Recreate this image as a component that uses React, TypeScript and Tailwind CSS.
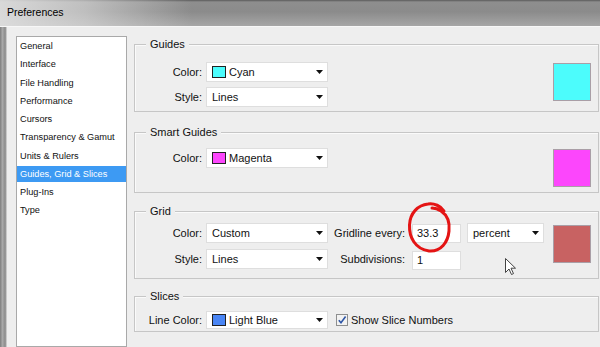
import React from 'react';

const sidebarItems = [
  'General',
  'Interface',
  'File Handling',
  'Performance',
  'Cursors',
  'Transparency & Gamut',
  'Units & Rulers',
  'Guides, Grid & Slices',
  'Plug-Ins',
  'Type',
];

function Arrow() {
  return (
    <svg width="7" height="4" viewBox="0 0 7 4" className="shrink-0">
      <path d="M0 0H7L3.5 4Z" fill="#111" />
    </svg>
  );
}

function Select({ label, swatch, width = 'w-[122px]', height = 'h-[20px]' }: { label: string; swatch?: string; width?: string; height?: string }) {
  return (
    <div className={`flex ${height} ${width} items-center border border-[#dedede] bg-white pl-[5px] pr-[4px]`}>
      {swatch ? <span className={`mr-[3px] h-[12px] w-[14px] shrink-0 border border-[#222] ${swatch}`} /> : null}
      <span className="flex-1 truncate">{label}</span>
      <Arrow />
    </div>
  );
}

function Field({ value }: { value: string }) {
  return <div className="flex h-[19px] w-[49px] items-center border border-[#dedede] bg-white pl-[4px]">{value}</div>;
}

function Label({ children }: { children: React.ReactNode }) {
  return <div className="w-[71px] shrink-0 pr-[4px] text-right">{children}</div>;
}

function GroupBox({ title, className, children }: { title: string; className: string; children: React.ReactNode }) {
  return (
    <div className={`relative flex border border-[#c6c6c6] pr-[7px] shadow-[inset_1px_1px_0_#fafafa] ${className}`}>
      <div className="absolute -top-[8px] left-[11px] bg-[#eeeeee] px-[4px] text-[11px] leading-[14px]">{title}</div>
      {children}
    </div>
  );
}

function Swatch({ color, className }: { color: string; className: string }) {
  return <div className={`ml-auto h-[38px] w-[38px] shrink-0 border border-[#a99ea6] ${color} ${className}`} />;
}

export default function App() {
  return (
    <div className="relative h-[347px] w-[600px] overflow-hidden bg-[#eeeeee] font-['Liberation_Sans',Arial,sans-serif] text-[#111]">
      <div className="flex h-[26px] items-center bg-[linear-gradient(to_right,rgba(225,225,225,0.9)_0%,rgba(225,225,225,0.6)_14%,rgba(225,225,225,0)_32%),linear-gradient(to_bottom,#5a5a5a_0px,#8e8e8e_2px,#8b8b8b_45%,#a6a6a6_100%)] pl-[7px] text-[10.5px] text-black">
        Preferences
      </div>
      <div className="h-px bg-[#f7f7f7]" />

      <div className="flex h-[320px]">
        <div className="w-[7px] shrink-0 bg-[linear-gradient(to_right,#7d7d7d,#a9a9a9_35%,#8a8a8a_75%,#e2e2e2)]" />

        <div className="pl-[9px] pt-[9px]">
          <div className="flex h-full w-[111px] flex-col gap-[2.25px] border border-[#a9a9a9] bg-white pt-[1px] text-[9.2px]">
            {sidebarItems.map((item) => (
              <div
                key={item}
                className={
                  item === 'Guides, Grid & Slices'
                    ? 'h-[16px] bg-[#3d9af3] pl-[3px] leading-[16px] text-white'
                    : 'h-[16px] pl-[3px] leading-[16px]'
                }
              >
                {item}
              </div>
            ))}
          </div>
        </div>

        <div className="flex-1 pl-[7px] pr-[1px] pt-[17px] text-[11px]">
          <GroupBox title="Guides" className="h-[68px] items-start pt-[17px]">
            <div className="flex flex-col gap-[5px]">
              <div className="flex h-[20px] items-center">
                <Label>Color:</Label>
                <Select label="Cyan" swatch="bg-[#4cfcfc]" />
              </div>
              <div className="flex h-[20px] items-center">
                <Label>Style:</Label>
                <Select label="Lines" />
              </div>
            </div>
            <Swatch color="bg-[#4cfcfc]" className="mt-[1px]" />
          </GroupBox>

          <GroupBox title="Smart Guides" className="mt-[20px] h-[61px] items-start pt-[15px]">
            <div className="flex h-[20px] items-center">
              <Label>Color:</Label>
              <Select label="Magenta" swatch="bg-[#fc46fc]" />
            </div>
            <Swatch color="bg-[#fc46fc]" className="mt-[1px]" />
          </GroupBox>

          <GroupBox title="Grid" className="mt-[18px] h-[68px] items-start pt-[11px]">
            <div className="flex flex-col gap-[6px]">
              <div className="flex h-[20px] items-center">
                <Label>Color:</Label>
                <Select label="Custom" />
                <div className="w-[84px] shrink-0 pr-[7px] text-right">Gridline every:</div>
                <Field value="33.3" />
                <div className="ml-[6px]">
                  <Select label="percent" width="w-[77px]" />
                </div>
              </div>
              <div className="flex h-[20px] items-center">
                <Label>Style:</Label>
                <Select label="Lines" />
                <div className="w-[84px] shrink-0 pr-[7px] text-right">Subdivisions:</div>
                <div className="mt-[3px]">
                  <Field value="1" />
                </div>
              </div>
            </div>
            <Swatch color="bg-[#c86262]" className="mt-[2px]" />
          </GroupBox>

          <GroupBox title="Slices" className="mt-[17px] h-[36px] items-start pt-[14px]">
            <div className="flex h-[18px] items-center">
              <Label>Line Color:</Label>
              <Select label="Light Blue" swatch="bg-[#4a86f5]" height="h-[18px]" />
              <div className="ml-[8px] flex h-[12px] w-[12px] items-center justify-center border border-[#8e8f8f] bg-[#f2f2f2]">
                <svg width="10" height="10" viewBox="0 0 10 10">
                  <path d="M1.8 5.2L4 7.8L8.6 1.6" fill="none" stroke="#2d55a5" strokeWidth="1.6" />
                </svg>
              </div>
              <span className="ml-[3px]">Show Slice Numbers</span>
            </div>
          </GroupBox>
        </div>
      </div>

      <svg className="absolute left-[400px] top-[198px]" width="56" height="58" viewBox="0 0 56 58">
        <path
          d="M44 13C41 8 34 5 28 6C18 7 10 15 9.5 27C9 39 15 51 29 53C41 54 48 44 49 33C50 24 47 17 41 13C38 11 35 10 32 10"
          fill="none"
          stroke="#e41414"
          strokeWidth="3"
          strokeLinecap="round"
        />
      </svg>

      <svg className="absolute left-[504px] top-[257px]" width="14" height="20" viewBox="0 0 14 20">
        <path d="M1.5 1.5V15.5L5 12L7.5 17.5L9.5 16.6L7 11.2H11.5Z" fill="#fff" stroke="#444" strokeWidth="1" strokeLinejoin="round" />
      </svg>
    </div>
  );
}
